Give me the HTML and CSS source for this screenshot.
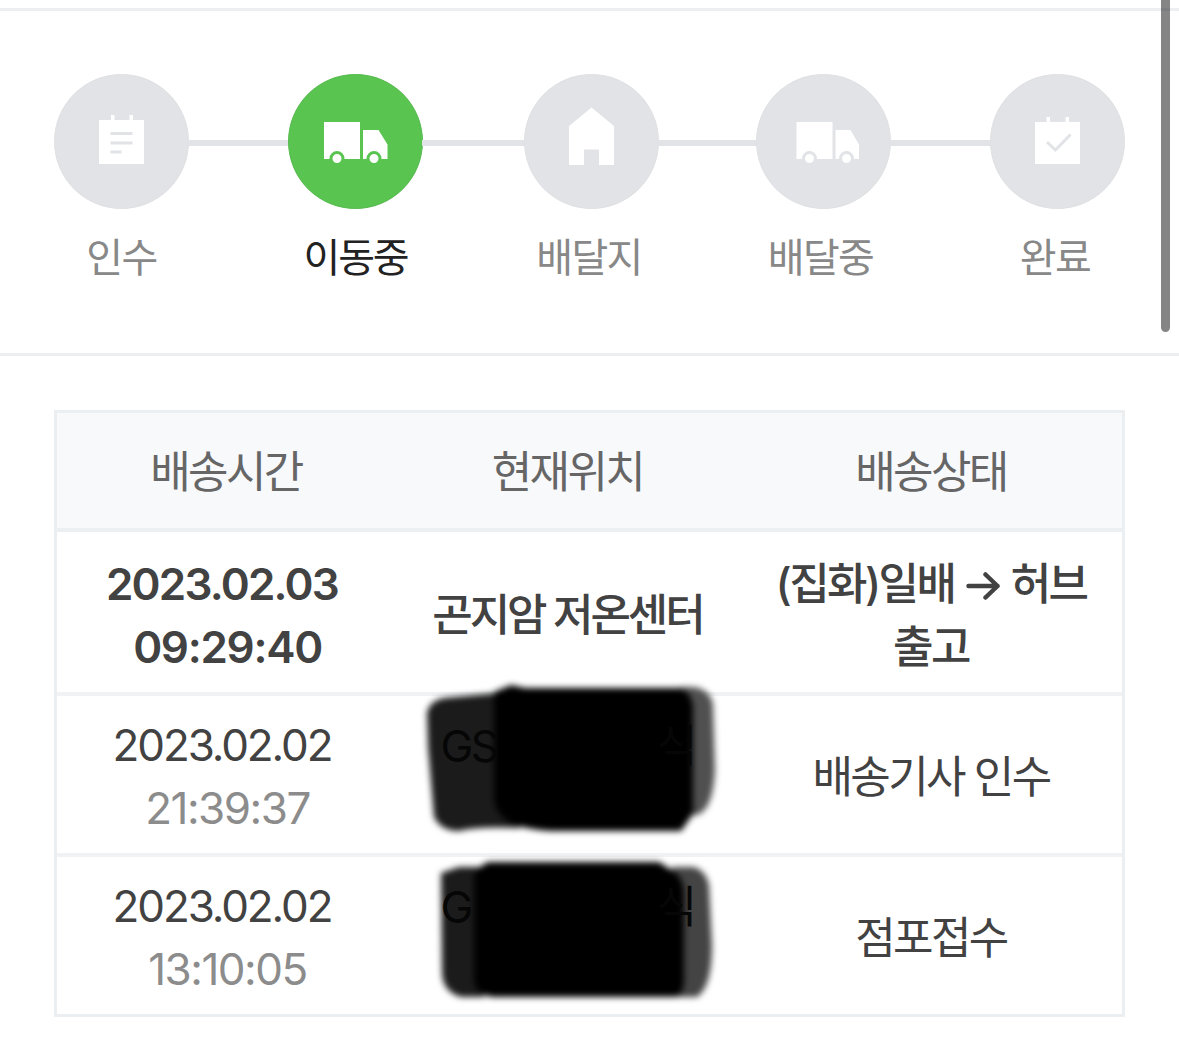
FILE: index.html
```html
<!DOCTYPE html>
<html lang="ko">
    <head>
        <title>배송조회</title>
        <meta charset="UTF-8">
        <meta name="viewport" content="width=device-width, initial-scale=1.0">
        <link rel="stylesheet" href="styles.css">
    </head>
    <body>
        <div class="progress">
            <div class="step first">
                <svg class="circle" viewBox="0 0 135 135">
                    <circle cx="67.5" cy="67.5" r="67"/>
                    <path class="icon" d="M45 46h12v-5h3.500v5h15v-5h3.500v5h11v44h-45z"/>
                    <path class="mark" d="M56.500 59.500h22M56.500 69h22M56.500 78h11"/>
                </svg>
                <span class="name">인수</span>
            </div>
            <div class="line"></div>
            <div class="step on">
                <svg class="circle" viewBox="0 0 135 135">
                    <circle cx="67.5" cy="67.5" r="67"/>
                    <path class="icon" d="M36 48h36v37h-36zM75 56h15.500l9 14.500v14.500h-24.500z"/>
                    <circle class="wheel" cx="49" cy="84.500" r="6"/>
                    <circle class="wheel" cx="86" cy="84.500" r="6"/>
                </svg>
                <span class="name">이동중</span>
            </div>
            <div class="line"></div>
            <div class="step">
                <svg class="circle" viewBox="0 0 135 135">
                    <circle cx="67.5" cy="67.5" r="67"/>
                    <path class="icon" d="M67.500 33.500l22.500 18.500v39h-15v-15.500h-15v15.500h-15v-39z"/>
                </svg>
                <span class="name">배달지</span>
            </div>
            <div class="line"></div>
            <div class="step">
                <svg class="circle" viewBox="0 0 135 135">
                    <circle cx="67.5" cy="67.5" r="67"/>
                    <path class="icon" d="M40.500 48h36v37h-36zM79.500 56h15l8.500 14.500v14.500h-23.500z"/>
                    <circle class="wheel" cx="53.500" cy="84.500" r="6"/>
                    <circle class="wheel" cx="90.500" cy="84.500" r="6"/>
                </svg>
                <span class="name">배달중</span>
            </div>
            <div class="line"></div>
            <div class="step">
                <svg class="circle" viewBox="0 0 135 135">
                    <circle cx="67.5" cy="67.5" r="67"/>
                    <path class="icon" d="M45 48h11.500v-5h3.500v5h15.500v-5h3.500v5h11v42h-45z"/>
                    <path class="mark" d="M57 68l8.500 8l15-15.500"/>
                </svg>
                <span class="name">완료</span>
            </div>
        </div>
        <div class="list">
            <table class="history">
                <tr class="head">
                    <th class="c1">배송시간</th>
                    <th class="c2">현재위치</th>
                    <th class="c3">배송상태</th>
                </tr>
                <tr class="now">
                    <td>2023.02.03<span class="time">09:29:40</span></td>
                    <td><div class="place">곤지암 저온센터</div></td>
                    <td><div class="state">(집화)일배 <svg class="arrow" viewBox="0 0 34 28"><path d="M2 14h29M19 2.500l12 11.500l-12 11.500"/></svg> 허브<br>출고</div></td>
                </tr>
                <tr>
                    <td>2023.02.02<span class="time">21:39:37</span></td>
                    <td><div class="hidden"><span>GS</span><span>식</span></div></td>
                    <td>배송기사 인수</td>
                </tr>
                <tr>
                    <td>2023.02.02<span class="time">13:10:05</span></td>
                    <td><div class="hidden"><span>G</span><span>식</span></div></td>
                    <td>점포접수</td>
                </tr>
            </table>
            <!-- marker strokes over the shop names -->
            <svg class="marker" viewBox="400 670 340 350">
                <g class="soft">
                    <path fill="#1b1b1b" d="M427 712q4-12 17-14l76-7v137q-44-2-61 3q-18 0-25-14l-6-70z"/>
                    <path fill="#505050" d="M680 687h14q17 3 19 18l2 65q-2 40-18 45h-17z"/>
                    <path fill="#000" d="M494 692l17-7l14 3h154q14 4 14 22v104l-12 17h-130q-30-2-42-9q-15-10-15-25z"/>
                    <path fill="#1b1b1b" d="M441 873l18-6h25v130h-23q-18-5-19-24z"/>
                    <path fill="#444" d="M672 867h22q12 4 15 18l3 60q0 42-15 52h-25z"/>
                    <path fill="#000" d="M474 876q2-8 14-14h171l14 9q11 7 11 22v86q0 18-12 18h-180q-18-3-18-20z"/>
                </g>
            </svg>
        </div>
        <div class="scroll"></div>
    </body>
</html>
```
FILE: styles.css
```css
*{
    box-sizing: border-box;
}
body{
    margin: 0;
    padding-top: 8px;
    height: 1045px;
    overflow: hidden;
    background-color: #fff;
    font-family: Inter, "Noto Sans CJK KR", sans-serif;
}
.progress{
    display: grid;
    grid-template-columns: 135px 99px 135px 101px 135px 96.5px 135px 99.5px 135px;
    height: 348px;
    padding: 63px 54px 0;
    border-top: 3px solid #ebeff2;
    border-bottom: 3px solid #ebeff2;
}
.step{
    display: flex;
    flex-direction: column;
    align-items: center;
    color: #888;
}
.line{
    height: 6px;
    margin: 66px -1px 0;
    background-color: #e2e3e7;
}
.circle{
    display: block;
    width: 135px;
    height: 135px;
    fill: #e2e3e7;
    stroke: #dfe0e2;
}
.icon{
    fill: #fff;
    stroke: none;
}
.mark{
    fill: none;
    stroke: #e2e3e7;
    stroke-width: 3;
}
.wheel{
    fill: #fff;
    stroke: #e2e3e7;
    stroke-width: 3;
}
.on{
    color: #222;
}
.on .circle{
    fill: #5ac451;
    stroke: #55b94d;
}
.on .wheel{
    stroke: #5ac451;
}
.name{
    margin: 19px 5px 0 0;
    font-size: 40px;
    line-height: 60px;
    letter-spacing: -1.6px;
    white-space: nowrap;
}
.first .name{
    margin-right: 0;
}
.on .name{
    margin-right: 0;
    letter-spacing: -2.2px;
}
.list{
    position: relative;
    margin: 54px 54px 0;
}
.history{
    width: 1071px;
    height: 607px;
    table-layout: fixed;
    border: 3px solid #ebeff2;
    border-spacing: 0;
    text-align: center;
    font-size: 44px;
    line-height: 63px;
    letter-spacing: -2.6px;
    color: #424242;
}
th,td{
    padding: 6px 0 0;
    border-bottom: 4px solid #f0f2f3;
}
th{
    height: 119px;
    padding-top: 3px;
    background-color: #f8f9fb;
    border-bottom-color: #ebeff2;
    font-weight: 400;
    color: #666;
}
td{
    height: 161px;
}
tr:last-child td{
    height: 157px;
    border-bottom: 0;
}
.c1{
    width: 338px;
}
.c2{
    width: 345px;
}
.now td{
    height: 164px;
    padding-top: 7px;
    font-weight: 600;
}
.time{
    display: block;
    padding-left: 11px;
    letter-spacing: -1.5px;
    color: #8c8c8c;
}
td:first-child{
    padding-top: 4px;
    padding-right: 8px;
    letter-spacing: -2.1px;
}
.now td:first-child{
    padding-top: 7px;
    letter-spacing: -1.8px;
}
.now .time{
    letter-spacing: -1.3px;
    color: #424242;
}
.place,.state{
    font-weight: 500;
}
.place{
    letter-spacing: -3.1px;
}
.arrow{
    width: 35px;
    height: 28px;
    margin: 0 1px 0 2px;
    fill: none;
    stroke: #424242;
    stroke-width: 4.5;
    stroke-linecap: round;
    stroke-linejoin: round;
}
.hidden{
    position: relative;
    z-index: 2;
    display: flex;
    justify-content: space-between;
    width: 254px;
    height: 126px;
    margin: 0 auto;
    color: #060606;
}
.marker{
    position: absolute;
    left: 346px;
    top: 260px;
    width: 340px;
    height: 350px;
    z-index: 1;
}
.soft{
    filter: blur(3px);
}
.scroll{
    position: absolute;
    top: 0;
    right: 9px;
    width: 9px;
    height: 332px;
    border-radius: 0 0 5px 5px;
    background-color: rgba(0,0,0,.48);
}
```
